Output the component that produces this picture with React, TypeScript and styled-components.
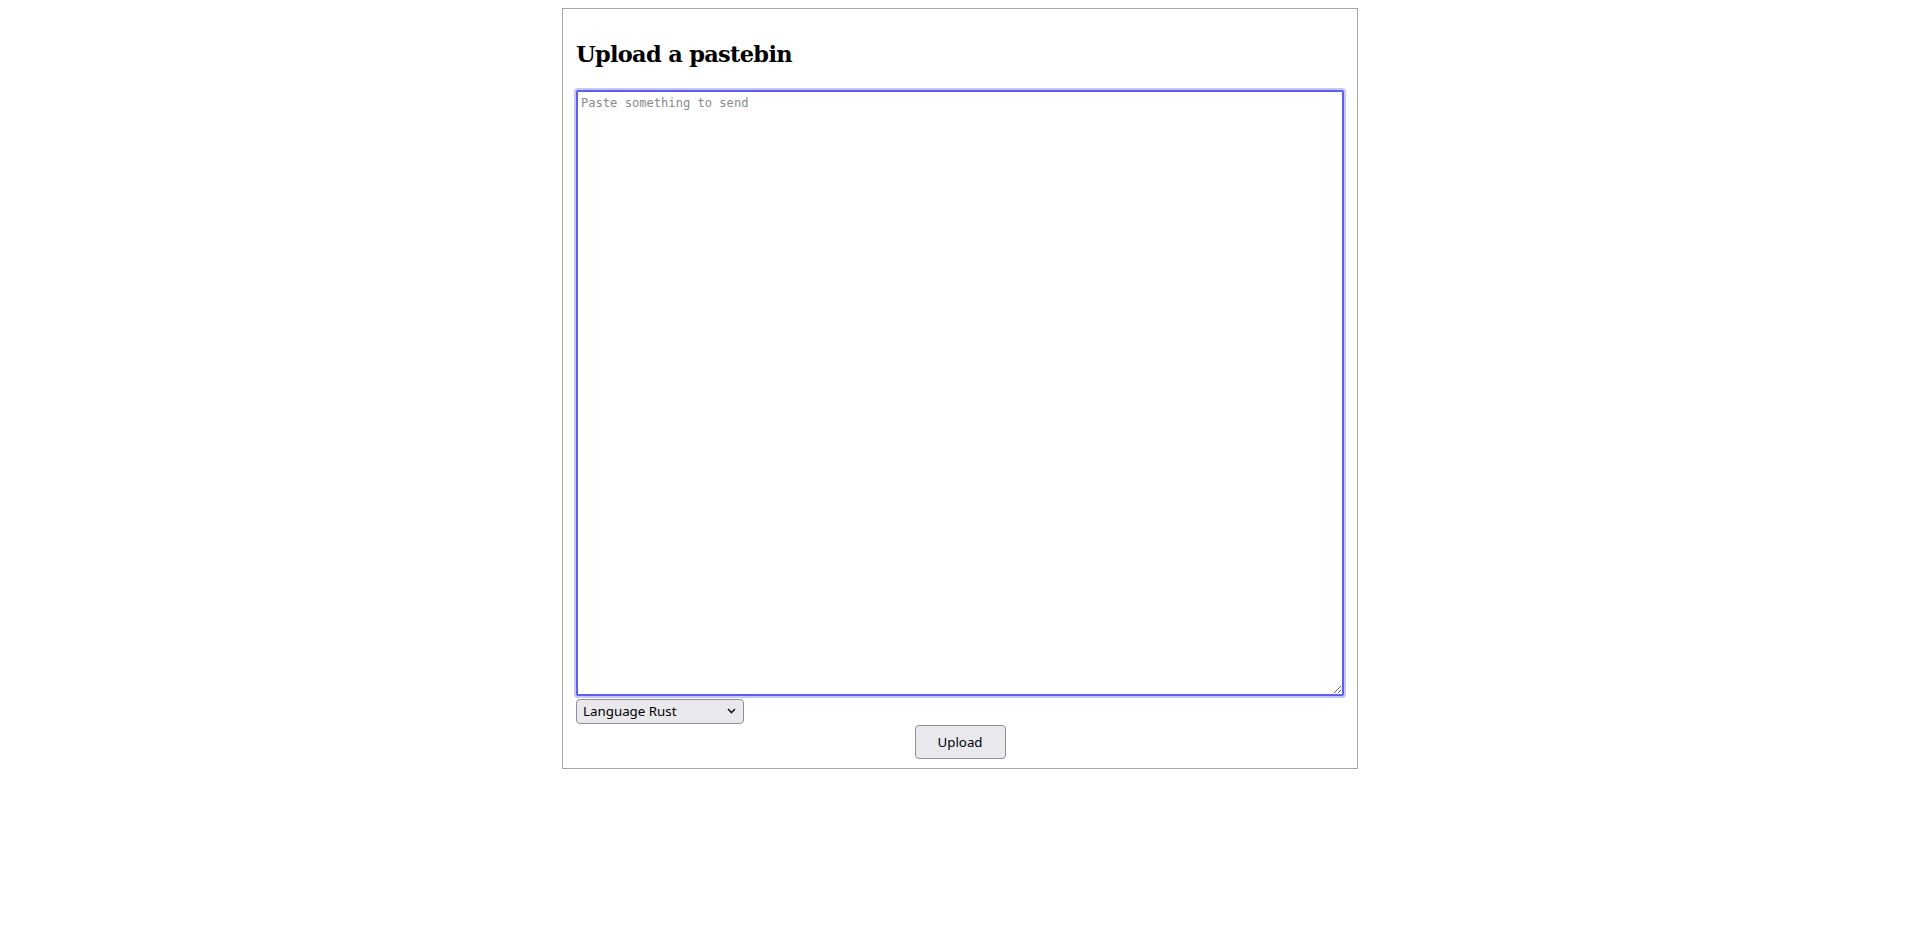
import React from "react";
import styled, { createGlobalStyle } from "styled-components";

const GlobalStyle = createGlobalStyle`
  html, body { background: #ffffff; }
  body {
    margin: 8px;
    font-family: "DejaVu Serif", "Liberation Serif", serif;
    color: #000;
  }
`;

const Card = styled.main`
  box-sizing: content-box;
  width: 768px;
  margin: 0 auto;
  padding: 0 13px 9px;
  border: 1px solid #a8a8a8;
  display: flex;
  flex-direction: column;
`;

const Title = styled.h2`
  margin: 31px 0 22px;
  font-family: "DejaVu Serif", "Liberation Serif", serif;
  font-size: 22.5px;
  letter-spacing: -0.7px;
  line-height: 28px;
  font-weight: bold;
  color: #000;
`;

const Form = styled.form`
  display: flex;
  flex-direction: column;
  align-items: flex-start;
`;

const PasteArea = styled.textarea`
  box-sizing: border-box;
  display: block;
  width: 768px;
  height: 606px;
  margin: 0;
  padding: 4px 3px;
  border: 2px solid #5e5ef6;
  border-radius: 2px;
  box-shadow: 0 0 0 2px #c6c6fb;
  outline: none;
  background: #fff;
  font-family: "DejaVu Sans Mono", "Liberation Mono", monospace;
  font-size: 12.1px;
  line-height: 15px;
  color: #000;
  caret-color: #000;
  resize: both;

  &::placeholder {
    color: #8a8a8a;
    opacity: 1;
  }
  &:focus {
    outline: none;
  }
`;

const SelectWrap = styled.div`
  position: relative;
  margin-top: 3px;
  width: 168px;
  height: 25px;
`;

const LanguageSelect = styled.select`
  appearance: none;
  -webkit-appearance: none;
  box-sizing: border-box;
  width: 168px;
  height: 25px;
  margin: 0;
  padding: 0 24px 0 6px;
  border: 1px solid #8f8f9d;
  border-radius: 4px;
  background: #e9e9ed;
  color: #000;
  font-family: "Noto Sans", "Open Sans", sans-serif;
  font-size: 13.33px;
  line-height: 23px;
  outline: none;
`;

const Chevron = styled.svg`
  position: absolute;
  right: 8px;
  top: 9px;
  width: 9px;
  height: 6px;
  pointer-events: none;
`;

const ButtonRow = styled.div`
  align-self: stretch;
  display: flex;
  justify-content: center;
  margin-top: 1px;
`;

const UploadButton = styled.button`
  box-sizing: border-box;
  width: 91px;
  height: 34px;
  margin: 0;
  padding: 0 12px;
  border: 1px solid #8f8f9d;
  border-radius: 4px;
  background: #e9e9ed;
  color: #000;
  font-family: "Noto Sans", "Open Sans", sans-serif;
  font-size: 13.33px;
  cursor: pointer;
`;

export default function App() {
  return (
    <>
      <GlobalStyle />
      <Card>
        <Title>Upload a pastebin</Title>
        <Form onSubmit={(e) => e.preventDefault()}>
          <PasteArea placeholder="Paste something to send" autoFocus />
          <SelectWrap>
            <LanguageSelect defaultValue="rust">
              <option value="rust">Language Rust</option>
              <option value="python">Language Python</option>
              <option value="javascript">Language JavaScript</option>
              <option value="plain">Language Plain text</option>
            </LanguageSelect>
            <Chevron viewBox="0 0 9 6" aria-hidden="true">
              <path d="M1 1 L4.5 4.5 L8 1" fill="none" stroke="#1a1a1a" strokeWidth="1.6" />
            </Chevron>
          </SelectWrap>
          <ButtonRow>
            <UploadButton type="submit">Upload</UploadButton>
          </ButtonRow>
        </Form>
      </Card>
    </>
  );
}
